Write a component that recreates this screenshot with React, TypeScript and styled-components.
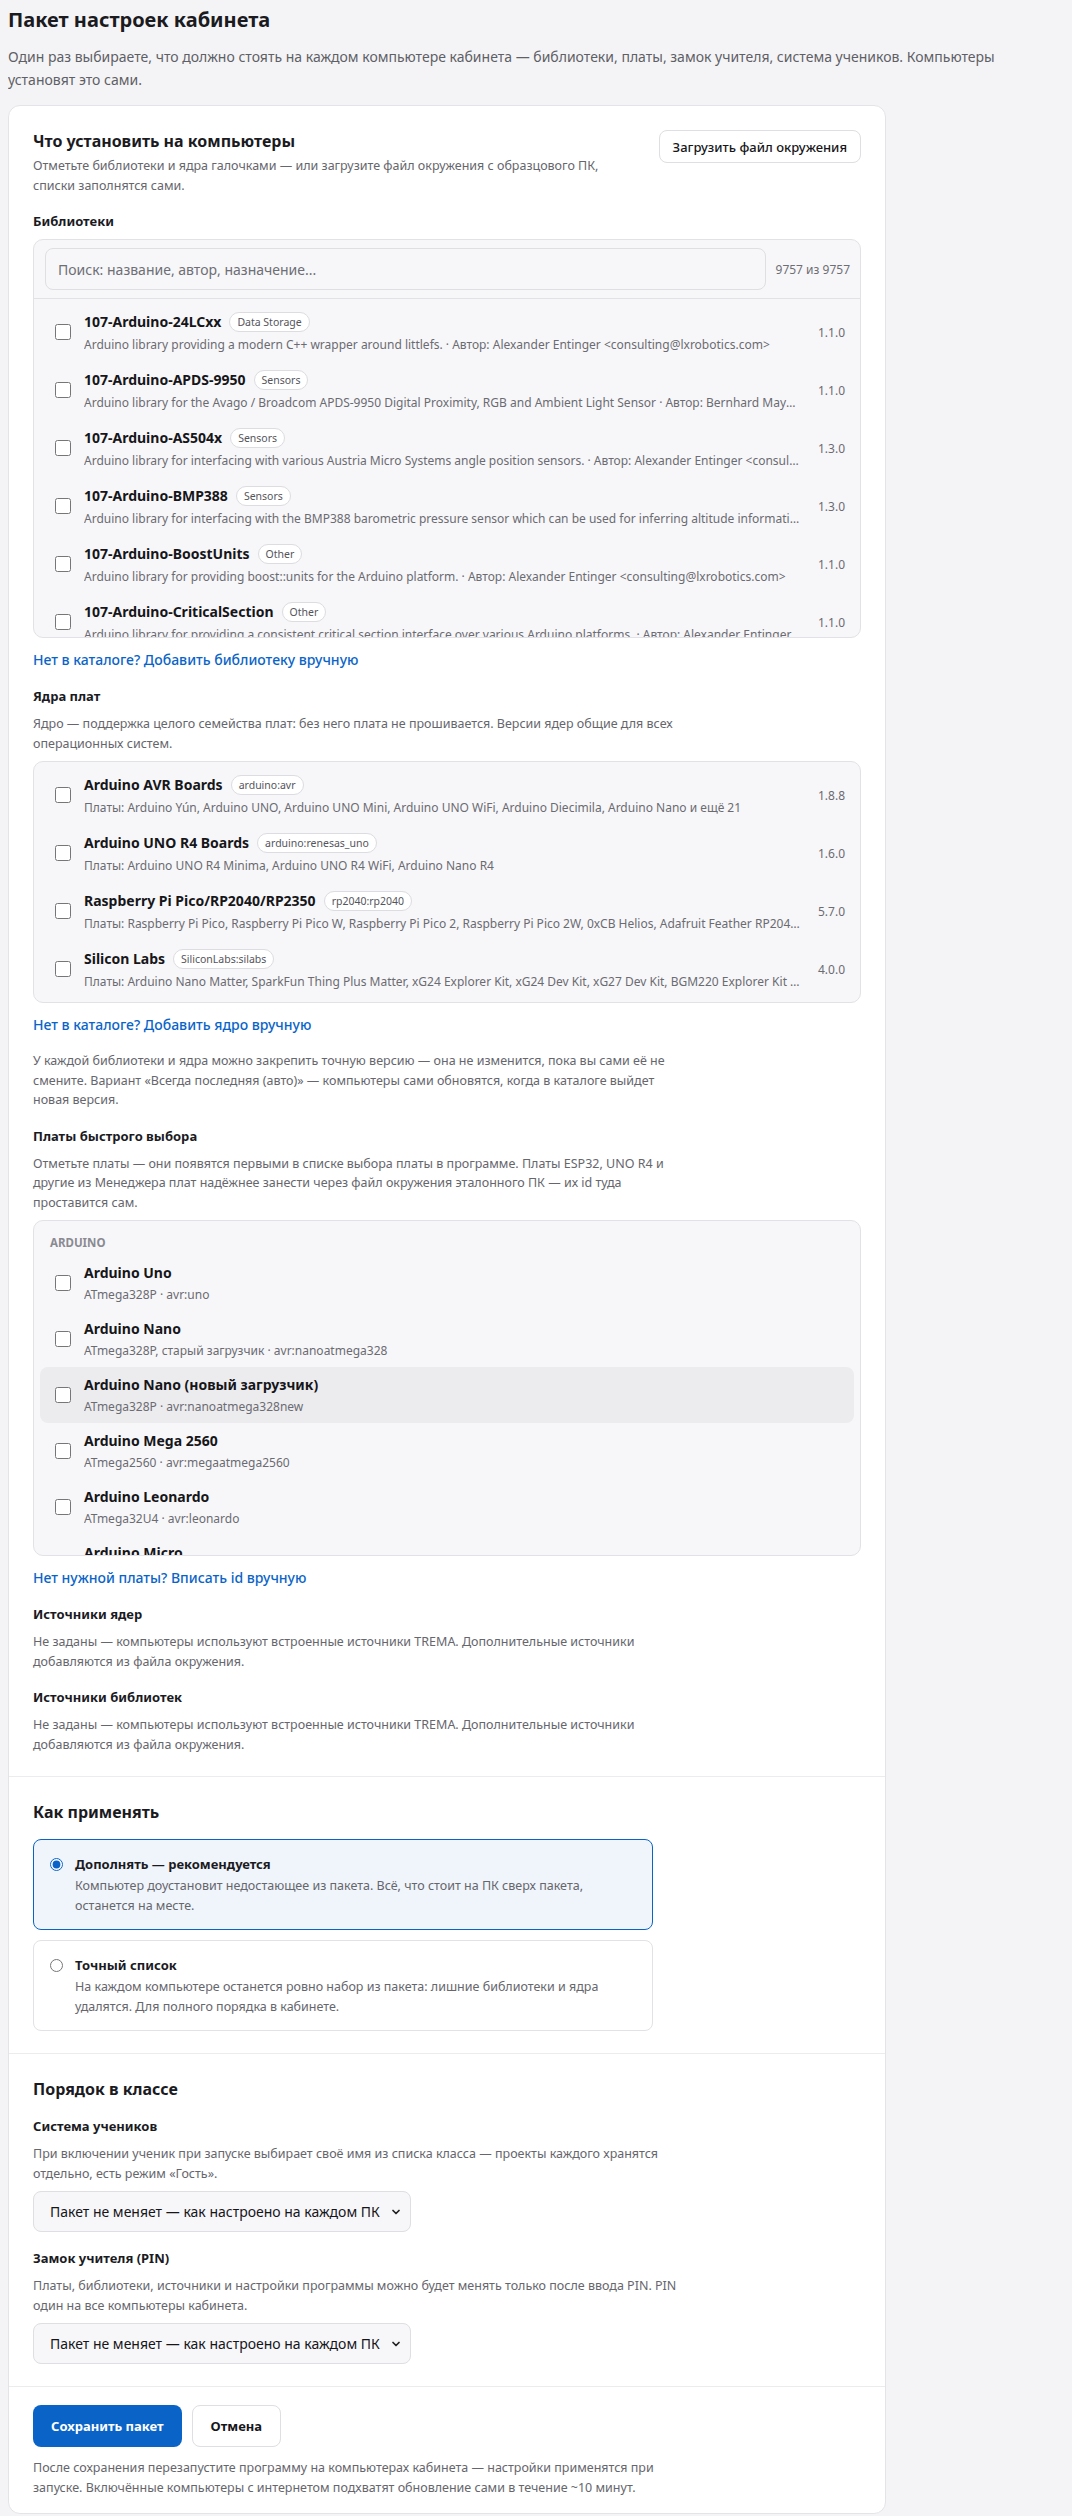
import React, { useState } from "react";
import styled, { createGlobalStyle } from "styled-components";
import { ChevronDown } from "lucide-react";

const GlobalStyle = createGlobalStyle`
  body {
    margin: 8px;
    background: #f4f4f6;
    font-family: "Noto Sans", "Open Sans", Arial, sans-serif;
    color: #1b1b1f;
  }
  * { box-sizing: border-box; }
`;

const libraries = [
  {
    name: "107-Arduino-24LCxx",
    tag: "Data Storage",
    desc: "Arduino library providing a modern C++ wrapper around littlefs. · Автор: Alexander Entinger <consulting@lxrobotics.com>",
    ver: "1.1.0"
  },
  {
    name: "107-Arduino-APDS-9950",
    tag: "Sensors",
    desc: "Arduino library for the Avago / Broadcom APDS-9950 Digital Proximity, RGB and Ambient Light Sensor · Автор: Bernhard Mayer <bernhard@generationmake.de>",
    ver: "1.1.0"
  },
  {
    name: "107-Arduino-AS504x",
    tag: "Sensors",
    desc: "Arduino library for interfacing with various Austria Micro Systems angle position sensors. · Автор: Alexander Entinger <consulting@lxrobotics.com>",
    ver: "1.3.0"
  },
  {
    name: "107-Arduino-BMP388",
    tag: "Sensors",
    desc: "Arduino library for interfacing with the BMP388 barometric pressure sensor which can be used for inferring altitude information. · Автор: Alexander Entinger",
    ver: "1.3.0"
  },
  {
    name: "107-Arduino-BoostUnits",
    tag: "Other",
    desc: "Arduino library for providing boost::units for the Arduino platform. · Автор: Alexander Entinger <consulting@lxrobotics.com>",
    ver: "1.1.0"
  },
  {
    name: "107-Arduino-CriticalSection",
    tag: "Other",
    desc: "Arduino library for providing a consistent critical section interface over various Arduino platforms. · Автор: Alexander Entinger <consulting@lxrobotics.com>",
    ver: "1.1.0"
  },
  {
    name: "107-Arduino-Cyphal",
    tag: "Communication",
    desc: "Arduino library for providing a convenient C++ interface for accessing OpenCyphal. · Автор: Alexander Entinger <consulting@lxrobotics.com>",
    ver: "0.2.1"
  }
];

const cores = [
  {
    name: "Arduino AVR Boards",
    tag: "arduino:avr",
    desc: "Платы: Arduino Yún, Arduino UNO, Arduino UNO Mini, Arduino UNO WiFi, Arduino Diecimila, Arduino Nano и ещё 21",
    ver: "1.8.8"
  },
  {
    name: "Arduino UNO R4 Boards",
    tag: "arduino:renesas_uno",
    desc: "Платы: Arduino UNO R4 Minima, Arduino UNO R4 WiFi, Arduino Nano R4",
    ver: "1.6.0"
  },
  {
    name: "Raspberry Pi Pico/RP2040/RP2350",
    tag: "rp2040:rp2040",
    desc: "Платы: Raspberry Pi Pico, Raspberry Pi Pico W, Raspberry Pi Pico 2, Raspberry Pi Pico 2W, 0xCB Helios, Adafruit Feather RP2040 и ещё 140",
    ver: "5.7.0"
  },
  {
    name: "Silicon Labs",
    tag: "SiliconLabs:silabs",
    desc: "Платы: Arduino Nano Matter, SparkFun Thing Plus Matter, xG24 Explorer Kit, xG24 Dev Kit, xG27 Dev Kit, BGM220 Explorer Kit и ещё 12",
    ver: "4.0.0"
  }
];

const boards = [
  { name: "Arduino Uno", desc: "ATmega328P · avr:uno" },
  { name: "Arduino Nano", desc: "ATmega328P, старый загрузчик · avr:nanoatmega328" },
  { name: "Arduino Nano (новый загрузчик)", desc: "ATmega328P · avr:nanoatmega328new" },
  { name: "Arduino Mega 2560", desc: "ATmega2560 · avr:megaatmega2560" },
  { name: "Arduino Leonardo", desc: "ATmega32U4 · avr:leonardo" },
  { name: "Arduino Micro", desc: "ATmega32U4 · avr:micro" }
];

const App = () => {
  const [mode, setMode] = useState("merge");
  const [hovered] = useState(2);

  return (
    <Page>
      <GlobalStyle />
      <PageTitle>Пакет настроек кабинета</PageTitle>
      <Lead>
        Один раз выбираете, что должно стоять на каждом компьютере кабинета — библиотеки, платы, замок учителя,
        система учеников. Компьютеры установят это сами.
      </Lead>

      <Card>
        <Section>
          <HeaderRow>
            <div>
              <SectionTitle>Что установить на компьютеры</SectionTitle>
              <Hint $narrow>
                Отметьте библиотеки и ядра галочками — или загрузите файл окружения с образцового ПК, списки заполнятся
                сами.
              </Hint>
            </div>
            <GhostButton>Загрузить файл окружения</GhostButton>
          </HeaderRow>

          <Block>
            <Label>Библиотеки</Label>
            <ListBox>
              <SearchBar>
                <SearchInput placeholder="Поиск: название, автор, назначение..." />
                <Count>9757 из 9757</Count>
              </SearchBar>
              <Scroll $max={338}>
                {libraries.map((lib) => (
                  <Row key={lib.name}>
                    <Check type="checkbox" />
                    <RowBody>
                      <NameLine>
                        <Name>{lib.name}</Name>
                        <Tag>{lib.tag}</Tag>
                      </NameLine>
                      <RowDesc>{lib.desc}</RowDesc>
                    </RowBody>
                    <Version>{lib.ver}</Version>
                  </Row>
                ))}
              </Scroll>
            </ListBox>
            <LinkButton>Нет в каталоге? Добавить библиотеку вручную</LinkButton>
          </Block>

          <Block>
            <Label>Ядра плат</Label>
            <Hint>
              Ядро — поддержка целого семейства плат: без него плата не прошивается. Версии ядер общие для всех
              операционных систем.
            </Hint>
            <ListBox>
              <Scroll>
                {cores.map((core) => (
                  <Row key={core.name}>
                    <Check type="checkbox" />
                    <RowBody>
                      <NameLine>
                        <Name>{core.name}</Name>
                        <Tag>{core.tag}</Tag>
                      </NameLine>
                      <RowDesc>{core.desc}</RowDesc>
                    </RowBody>
                    <Version>{core.ver}</Version>
                  </Row>
                ))}
              </Scroll>
            </ListBox>
            <LinkButton>Нет в каталоге? Добавить ядро вручную</LinkButton>
          </Block>

          <Hint>
            У каждой библиотеки и ядра можно закрепить точную версию — она не изменится, пока вы сами её не смените.
            Вариант «Всегда последняя (авто)» — компьютеры сами обновятся, когда в каталоге выйдет новая версия.
          </Hint>

          <Block>
            <Label>Платы быстрого выбора</Label>
            <Hint>
              Отметьте платы — они появятся первыми в списке выбора платы в программе. Платы ESP32, UNO R4 и другие из
              Менеджера плат надёжнее занести через файл окружения эталонного ПК — их id туда проставится сам.
            </Hint>
            <ListBox>
              <Scroll $max={334}>
                <GroupLabel>Arduino</GroupLabel>
                {boards.map((b, i) => (
                  <Row key={b.name} $compact $active={i === hovered}>
                    <Check type="checkbox" />
                    <RowBody>
                      <Name>{b.name}</Name>
                      <RowDesc>{b.desc}</RowDesc>
                    </RowBody>
                  </Row>
                ))}
              </Scroll>
            </ListBox>
            <LinkButton>Нет нужной платы? Вписать id вручную</LinkButton>
          </Block>

          <Block>
            <Label>Источники ядер</Label>
            <Hint>
              Не заданы — компьютеры используют встроенные источники TREMA. Дополнительные источники добавляются из
              файла окружения.
            </Hint>
          </Block>

          <Block>
            <Label>Источники библиотек</Label>
            <Hint>
              Не заданы — компьютеры используют встроенные источники TREMA. Дополнительные источники добавляются из
              файла окружения.
            </Hint>
          </Block>
        </Section>

        <Section>
          <SectionTitle>Как применять</SectionTitle>
          <Options>
            <Option $selected={mode === "merge"}>
              <Radio type="radio" name="mode" checked={mode === "merge"} onChange={() => setMode("merge")} />
              <div>
                <OptionTitle>Дополнять — рекомендуется</OptionTitle>
                <OptionDesc>
                  Компьютер доустановит недостающее из пакета. Всё, что стоит на ПК сверх пакета, останется на месте.
                </OptionDesc>
              </div>
            </Option>
            <Option $selected={mode === "exact"}>
              <Radio type="radio" name="mode" checked={mode === "exact"} onChange={() => setMode("exact")} />
              <div>
                <OptionTitle>Точный список</OptionTitle>
                <OptionDesc>
                  На каждом компьютере останется ровно набор из пакета: лишние библиотеки и ядра удалятся. Для полного
                  порядка в кабинете.
                </OptionDesc>
              </div>
            </Option>
          </Options>
        </Section>

        <Section>
          <SectionTitle>Порядок в классе</SectionTitle>
          <Block>
            <Label>Система учеников</Label>
            <Hint>
              При включении ученик при запуске выбирает своё имя из списка класса — проекты каждого хранятся отдельно,
              есть режим «Гость».
            </Hint>
            <SelectWrap>
              <Select defaultValue="keep">
                <option value="keep">Пакет не меняет — как настроено на каждом ПК</option>
                <option value="on">Включить</option>
                <option value="off">Выключить</option>
              </Select>
              <SelectIcon size={12} strokeWidth={3.5} />
            </SelectWrap>
          </Block>
          <Block>
            <Label>Замок учителя (PIN)</Label>
            <Hint>
              Платы, библиотеки, источники и настройки программы можно будет менять только после ввода PIN. PIN один на
              все компьютеры кабинета.
            </Hint>
            <SelectWrap>
              <Select defaultValue="keep">
                <option value="keep">Пакет не меняет — как настроено на каждом ПК</option>
                <option value="on">Включить</option>
                <option value="off">Выключить</option>
              </Select>
              <SelectIcon size={12} strokeWidth={3.5} />
            </SelectWrap>
          </Block>
        </Section>

        <Footer>
          <Actions>
            <PrimaryButton>Сохранить пакет</PrimaryButton>
            <GhostButton $tall>Отмена</GhostButton>
          </Actions>
          <Hint>
            После сохранения перезапустите программу на компьютерах кабинета — настройки применятся при запуске.
            Включённые компьютеры с интернетом подхватят обновление сами в течение ~10 минут.
          </Hint>
        </Footer>
      </Card>
    </Page>
  );
};

const Page = styled.div`
  display: flex;
  flex-direction: column;
`;

const PageTitle = styled.h1`
  margin: 0;
  font-size: 20px;
  line-height: 24px;
  font-weight: 700;
`;

const Lead = styled.p`
  margin: 14px 0 14px;
  font-size: 14px;
  line-height: 22.5px;
  color: #5f5f66;
`;

const Card = styled.div`
  width: 878px;
  background: #fff;
  border: 1px solid #e4e4e8;
  border-radius: 12px;
`;

const Section = styled.div`
  display: flex;
  flex-direction: column;
  gap: 16px;
  padding: 24px 24px 22px;

  & + & {
    border-top: 1px solid #ececef;
  }
`;

const HeaderRow = styled.div`
  display: flex;
  justify-content: space-between;
  align-items: flex-start;
  gap: 16px;
`;

const SectionTitle = styled.h2`
  margin: 0;
  font-size: 16px;
  line-height: 22px;
  font-weight: 700;
`;

const Hint = styled.p<{ $narrow?: boolean }>`
  margin: ${(p) => (p.$narrow ? "4px" : "0")} 0 0;
  max-width: ${(p) => (p.$narrow ? "570px" : "656px")};
  font-size: 12.5px;
  line-height: 19.5px;
  color: #66666d;
`;

const Block = styled.div`
  display: flex;
  flex-direction: column;
  gap: 8px;
`;

const Label = styled.div`
  font-size: 13px;
  line-height: 20px;
  font-weight: 700;
`;

const ListBox = styled.div`
  background: #f7f7f9;
  border: 1px solid #e2e2e6;
  border-radius: 10px;
  overflow: hidden;
`;

const SearchBar = styled.div`
  display: flex;
  align-items: center;
  gap: 10px;
  padding: 8px 10px 8px 11px;
  border-bottom: 1px solid #e2e2e6;
`;

const SearchInput = styled.input`
  flex: 1;
  height: 42px;
  padding: 0 12px;
  border: 1px solid #dedee3;
  border-radius: 8px;
  background: #f7f7f9;
  font-family: inherit;
  font-size: 14px;
  color: #222;
  outline: none;

  &::placeholder {
    color: #6e6e75;
  }
`;

const Count = styled.span`
  font-size: 12px;
  color: #6e6e75;
  white-space: nowrap;
`;

const Scroll = styled.div<{ $max?: number }>`
  padding: 4px 6px;
  max-height: ${(p) => (p.$max ? `${p.$max}px` : "none")};
  overflow-y: auto;
  scrollbar-width: none;

  &::-webkit-scrollbar {
    display: none;
  }
`;

const GroupLabel = styled.div`
  padding: 10px 10px 4px;
  font-size: 11.5px;
  line-height: 16px;
  font-weight: 700;
  text-transform: uppercase;
  color: #8a8a92;
`;

const Row = styled.label<{ $compact?: boolean; $active?: boolean }>`
  display: flex;
  align-items: center;
  gap: 13px;
  padding: 8px 9px 8px 15px;
  border-radius: 8px;
  background: ${(p) => (p.$active ? "#ececef" : "transparent")};
  cursor: pointer;
`;

const Check = styled.input`
  flex: none;
  width: 16px;
  height: 16px;
  margin: 0;
  accent-color: #0a64c8;
`;

const RowBody = styled.div`
  flex: 1;
  min-width: 0;
  display: flex;
  flex-direction: column;
  gap: 3px;
`;

const NameLine = styled.div`
  display: flex;
  align-items: center;
  gap: 8px;
  height: 22px;
`;

const Name = styled.span`
  font-size: 14px;
  line-height: 20px;
  font-weight: 700;
  color: #16161a;
`;

const Tag = styled.span`
  height: 20px;
  padding: 0 7px;
  display: inline-flex;
  align-items: center;
  border: 1px solid #dcdce1;
  border-radius: 999px;
  background: #fff;
  font-size: 10.5px;
  color: #55555c;
  white-space: nowrap;
`;

const RowDesc = styled.div`
  font-size: 12px;
  line-height: 17px;
  color: #6b6b72;
  white-space: nowrap;
  overflow: hidden;
  text-overflow: ellipsis;
`;

const Version = styled.span`
  flex: none;
  margin-left: 4px;
  font-size: 12px;
  color: #6b6b72;
`;

const LinkButton = styled.button`
  align-self: flex-start;
  margin-top: 4px;
  padding: 0;
  border: none;
  background: none;
  font-family: inherit;
  font-size: 14px;
  line-height: 20px;
  font-weight: 500;
  color: #0a64c8;
  cursor: pointer;
`;

const GhostButton = styled.button<{ $tall?: boolean }>`
  flex: none;
  height: ${(p) => (p.$tall ? "42px" : "33px")};
  padding: 0 ${(p) => (p.$tall ? "18px" : "13px")};
  border: 1px solid #dedee3;
  border-radius: 8px;
  background: #fff;
  font-family: inherit;
  font-size: 13px;
  font-weight: ${(p) => (p.$tall ? 700 : 500)};
  color: #16161a;
  cursor: pointer;
`;

const Options = styled.div`
  display: flex;
  flex-direction: column;
  gap: 10px;
`;

const Option = styled.label<{ $selected?: boolean }>`
  display: flex;
  align-items: flex-start;
  gap: 12px;
  max-width: 620px;
  padding: 14px 16px;
  border: 1px solid ${(p) => (p.$selected ? "#0a64c8" : "#e2e2e6")};
  border-radius: 8px;
  background: ${(p) => (p.$selected ? "#f0f5fb" : "#fff")};
  cursor: pointer;
`;

const Radio = styled.input`
  flex: none;
  width: 13px;
  height: 13px;
  margin: 4px 0 0;
  accent-color: #0a64c8;
`;

const OptionTitle = styled.div`
  font-size: 13px;
  line-height: 20px;
  font-weight: 700;
`;

const OptionDesc = styled.div`
  margin-top: 2px;
  font-size: 12.5px;
  line-height: 19.5px;
  color: #66666d;
`;

const SelectWrap = styled.div`
  position: relative;
  align-self: flex-start;
`;

const Select = styled.select`
  appearance: none;
  height: 41px;
  padding: 0 30px 0 16px;
  border: 1px solid #dedee3;
  border-radius: 8px;
  background: #f7f7f9;
  font-family: inherit;
  font-size: 14px;
  color: #16161a;
  cursor: pointer;
`;

const SelectIcon = styled(ChevronDown)`
  position: absolute;
  right: 9px;
  top: 50%;
  transform: translateY(-50%);
  pointer-events: none;
  color: #222;
`;

const Footer = styled.div`
  display: flex;
  flex-direction: column;
  gap: 11px;
  padding: 18px 24px 16px;
  border-top: 1px solid #ececef;
`;

const Actions = styled.div`
  display: flex;
  gap: 10px;
`;

const PrimaryButton = styled.button`
  height: 42px;
  padding: 0 18px;
  border: none;
  border-radius: 8px;
  background: #0a64c8;
  font-family: inherit;
  font-size: 13px;
  font-weight: 700;
  color: #fff;
  cursor: pointer;
`;

export default App;
